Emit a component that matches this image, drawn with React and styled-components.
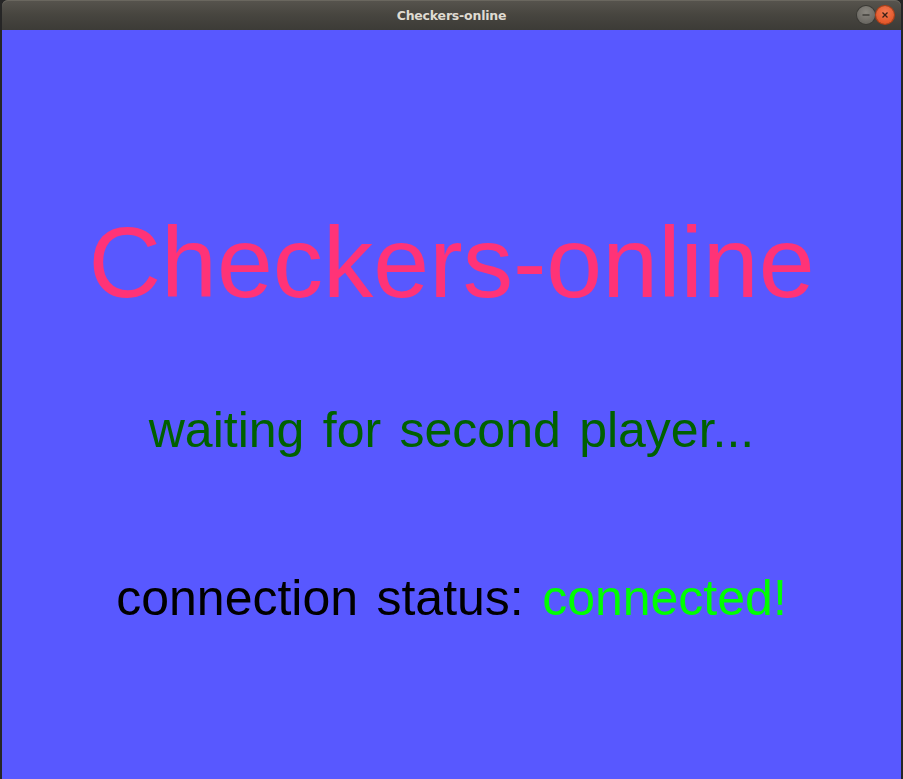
import React from 'react'
import styled, { createGlobalStyle } from 'styled-components'

const GlobalStyle = createGlobalStyle`
  html, body {
    margin: 0;
    padding: 0;
    background: #262626;
    overflow: hidden;
  }
`

const Desktop = styled.div`
  display: flex;
  width: 903px;
  height: 779px;
  padding: 0 2px 0 2px;
  box-sizing: border-box;
`

const Window = styled.div`
  display: flex;
  flex-direction: column;
  flex: 1;
`

const TitleBar = styled.div`
  position: relative;
  display: flex;
  align-items: center;
  justify-content: center;
  height: 30px;
  flex-shrink: 0;
  border-radius: 6px 6px 0 0;
  background: linear-gradient(to bottom, #57544e 0%, #47453f 50%, #3c3b37 100%);
  box-shadow: inset 0 1px 0 #6a675f;
`

const WindowTitle = styled.span`
  font-family: "DejaVu Sans", "Noto Sans", sans-serif;
  font-size: 12.5px;
  font-weight: bold;
  color: #dfdbd2;
  letter-spacing: -0.2px;
`

const Controls = styled.div`
  position: absolute;
  right: 7px;
  top: 6px;
  display: flex;
  gap: 1px;
`

const CtrlButton = styled.div`
  display: flex;
  align-items: center;
  justify-content: center;
  width: 18px;
  height: 18px;
  border-radius: 50%;
  background: ${(p) => (p.close ? 'radial-gradient(circle at 50% 35%, #f37a52, #df4a1a)' : 'radial-gradient(circle at 50% 35%, #8a8780, #5f5d58)')};
  box-shadow: 0 0 0 1px ${(p) => (p.close ? '#b73d12' : '#3a3935')};
`

const Content = styled.main`
  flex: 1;
  display: flex;
  flex-direction: column;
  align-items: center;
  background: #5858ff;
  padding-top: 182px;
  font-family: "Liberation Sans", Arial, sans-serif;
`

const Title = styled.h1`
  margin: 0;
  font-size: 100.5px;
  line-height: 100px;
  font-weight: 400;
  color: #ff3377;
`

const Line = styled.p`
  margin: ${(p) => p.gap}px 0 0 0;
  font-size: 50px;
  line-height: 50px;
  word-spacing: 4.5px;
  color: ${(p) => p.color || '#000000'};
`

const Status = styled.span`
  color: #00ff00;
`

export default function App() {
  return (
    <>
      <GlobalStyle />
      <Desktop>
        <Window>
          <TitleBar>
            <WindowTitle>Checkers-online</WindowTitle>
            <Controls>
              <CtrlButton>
                <svg width="10" height="10" viewBox="0 0 10 10">
                  <line x1="1.5" y1="5" x2="8.5" y2="5" stroke="#3b3a36" strokeWidth="1.4" />
                </svg>
              </CtrlButton>
              <CtrlButton close>
                <svg width="10" height="10" viewBox="0 0 10 10">
                  <path d="M2.5 2.5 L7.5 7.5 M7.5 2.5 L2.5 7.5" stroke="#3b2016" strokeWidth="1.3" />
                </svg>
              </CtrlButton>
            </Controls>
          </TitleBar>
          <Content>
            <Title>Checkers-online</Title>
            <Line gap={93} color="#006000">waiting for second player...</Line>
            <Line gap={118}>
              connection status: <Status>connected!</Status>
            </Line>
          </Content>
        </Window>
      </Desktop>
    </>
  )
}
